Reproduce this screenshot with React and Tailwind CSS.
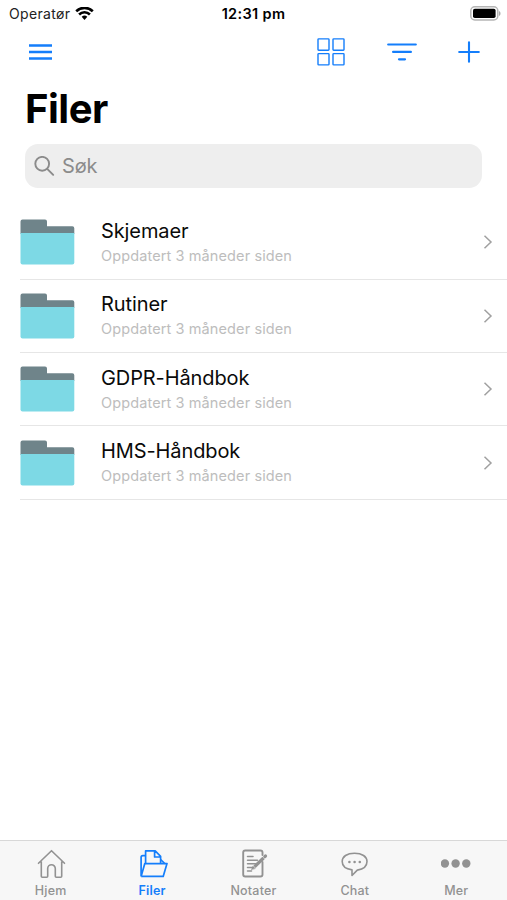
const folders = ["Skjemaer", "Rutiner", "GDPR-Håndbok", "HMS-Håndbok"];

function StatusBar() {
  return (
    <div className="grid h-7 shrink-0 grid-cols-3 items-center text-black">
      <div className="flex items-center gap-[5px] pl-[9px]">
        <span className="text-[14px] leading-5 tracking-[0.35px] text-[#222]">Operatør</span>
        <svg width="19" height="15" viewBox="0 0 19 15" fill="none" stroke="#000" strokeWidth="2.6">
          <path d="M1.2 4.2a12 12 0 0 1 16.6 0" />
          <path d="M4.1 7.5a7.700 7.700 0 0 1 10.800 0" />
          <path d="M6.700 9.800a4 4 0 0 1 5.600 0L9.500 12.900Z" fill="#000" stroke="none" />
        </svg>
      </div>
      <span className="text-center text-[14.5px] leading-5 font-semibold tracking-[0.35px] whitespace-nowrap">12:31 pm</span>
      <div className="flex justify-end pr-[6px]">
        <svg className="-mt-[2px]" width="31" height="15" viewBox="0 0 31 15">
          <rect x=".8" y=".8" width="27" height="13.200" rx="4" fill="#fff" stroke="#b5b5b5" strokeWidth="1.500" />
          <rect x="3" y="2.800" width="22.600" height="9.200" rx="1.800" fill="#000" />
          <path d="M29 5v5c2-.8 2-4.200 0-5Z" fill="#aaa" />
        </svg>
      </div>
    </div>
  );
}

function Toolbar() {
  return (
    <div className="flex h-12 shrink-0 items-center pr-[27px] pl-[29px] text-[#147efb]">
      <svg width="24" height="18" viewBox="0 0 24 18" stroke="currentColor" strokeWidth="2.300">
        <path d="M0 2.500h23M0 9h23M0 15.500h23" />
      </svg>
      <div className="ml-auto flex items-center">
        <svg className="mr-[42px]" width="29" height="28" viewBox="0 0 29 28" fill="none" stroke="currentColor" strokeWidth="1.400">
          <rect x="2" y=".9" width="11" height="11.300" rx=".7" />
          <rect x="17" y=".9" width="11" height="11.300" rx=".7" />
          <rect x="2" y="15.600" width="11" height="11.300" rx=".7" />
          <rect x="17" y="15.600" width="11" height="11.300" rx=".7" />
        </svg>
        <svg className="mr-[41px]" width="30" height="20" viewBox="0 0 30 20" stroke="currentColor" strokeWidth="2.200" strokeLinecap="round">
          <path d="M1.200 2.500h27.600M6.100 9.900h17.800M12 17.300h6" />
        </svg>
        <svg width="22" height="22" viewBox="0 0 22 22" stroke="currentColor" strokeWidth="2.100" strokeLinecap="round">
          <path d="M1.200 11h19.600M11 1.200v19.600" />
        </svg>
      </div>
    </div>
  );
}

function FolderRow({ name }) {
  return (
    <li className="ml-5 flex h-[73.400px] items-center border-b border-[#e6e6e6]">
      <svg className="shrink-0" width="55" height="46" viewBox="0 0 55 46">
        <path d="M.5 15V2.500Q.5.5 2.500.5h22.500q2 0 2 2V7.300H52.300q2 0 2 2V15Z" fill="#6f848a" />
        <path d="M.5 14H54.300v29.500q0 2-2 2H2.500q-2 0-2-2Z" fill="#7dd9e5" />
      </svg>
      <div className="ml-[26px] flex flex-col">
        <span className="text-[20px] leading-[26px] tracking-[-0.1px] text-[#0a0a0a]">{name}</span>
        <span className="text-[14.500px] leading-[23px] tracking-[0.11px] text-[#bdbdbd]">Oppdatert 3 måneder siden</span>
      </div>
      <svg className="mr-[14px] ml-auto" width="10" height="16" viewBox="0 0 10 16" fill="none" stroke="#a0a0a0" strokeWidth="1.500">
        <path d="M1.500 1.700 8 8l-6.500 6.300" />
      </svg>
    </li>
  );
}

function HomeIcon() {
  return (
    <svg width="30" height="32" viewBox="0 0 30 32" fill="none" stroke="currentColor" strokeWidth="1.600" strokeLinejoin="round" strokeLinecap="round">
      <path d="M2.500 15.300 15.500 2.700l13 12.600M5.300 13.500v14.700q0 1 1 1h4.400q1 0 1-1v-7.600a3.800 3.800 0 0 1 7.600 0v7.600q0 1 1 1h4.400q1 0 1-1V13.500" />
    </svg>
  );
}

function FilesIcon() {
  return (
    <svg width="32" height="32" viewBox="0 0 32 32" fill="none" stroke="currentColor" strokeWidth="1.700" strokeLinejoin="round">
      <path d="M5.100 28.400V9.300q0-1.700 1.700-1.700h2.800M5.100 28.400H27.200L31 15.600H8.800L5.100 28.400" />
      <path d="M9.600 15.600V2.900h9.600l5.400 5.400V15.600M18.600 3v6h5.800" />
      <path d="M24.600 11.500 28.800 15.600" />
    </svg>
  );
}

function NotesIcon() {
  return (
    <svg width="30" height="32" viewBox="0 0 30 32" fill="none" stroke="currentColor" strokeWidth="1.900" strokeLinecap="round">
      <path d="M24.500 7V4.500q0-2-2-2H7.200q-2 0-2 2v22q0 2 2 2H22.500q2 0 2-2V14" />
      <path d="M9.500 8.600H15M9.500 12.200h10M9.500 15.800h8M9.500 19.400h6M9.500 22.900h4" strokeWidth="1.500" />
      <path d="m16.500 18.800 9-8.800" strokeWidth="3.200" strokeLinecap="butt" />
      <path d="m26.800 8.700.7-.7" strokeWidth="3.200" />
      <path d="m13.500 21.600 1.300-3.300 2.300 2Z" fill="currentColor" strokeWidth=".5" />
    </svg>
  );
}

function ChatIcon() {
  return (
    <svg width="30" height="32" viewBox="0 0 30 32" fill="none" stroke="currentColor" strokeWidth="1.600" strokeLinejoin="round">
      <path d="M12 21.900v5.600l5.300-5.400C23.300 21.300 27 18.300 27 13.600 27 8.500 22 5.200 14.500 5.200S2.200 8.500 2.200 13.600c0 4.900 3.600 7.500 9.800 8.300Z" />
      <g fill="currentColor" stroke="none"><circle cx="9.400" cy="14" r="1.300" /><circle cx="14.600" cy="14" r="1.300" /><circle cx="19.800" cy="14" r="1.300" /></g>
    </svg>
  );
}

function MoreIcon() {
  return (
    <svg width="30" height="32" viewBox="0 0 30 32" fill="currentColor">
      <circle cx="3.900" cy="15.500" r="4.200" /><circle cx="14.600" cy="15.500" r="4.200" /><circle cx="25.300" cy="15.500" r="4.200" />
    </svg>
  );
}

const tabs = [
  { label: "Hjem", Icon: HomeIcon },
  { label: "Filer", Icon: FilesIcon, active: true },
  { label: "Notater", Icon: NotesIcon },
  { label: "Chat", Icon: ChatIcon },
  { label: "Mer", Icon: MoreIcon },
];

export default function App() {
  return (
    <div className="flex h-[900px] w-[507px] flex-col overflow-hidden bg-white font-['Inter','Liberation_Sans',sans-serif]">
      <StatusBar />
      <Toolbar />
      <h1 className="ml-[25px] h-[68px] text-[40px] leading-[66px] font-bold tracking-[-0.5px] text-black">Filer</h1>
      <div className="mr-[25px] ml-[25px] flex h-11 shrink-0 items-center rounded-[13px] bg-[#eeeeee] pl-[9px] text-[#8b8b8b]">
        <svg width="21" height="21" viewBox="0 0 21 21" fill="none" stroke="currentColor" strokeWidth="1.900">
          <circle cx="8.200" cy="7.800" r="6.900" />
          <path d="m13.200 12.800 6 6" strokeLinecap="round" />
        </svg>
        <span className="ml-[7px] text-[20px] leading-6 tracking-[-0.2px]">Søk</span>
      </div>
      <ul className="mt-[18.300px] flex flex-col">
        {folders.map((name) => <FolderRow key={name} name={name} />)}
      </ul>
      <nav className="mt-auto grid h-[60.500px] shrink-0 grid-cols-5 border-t border-[#d8d8d8] bg-[#f7f7f7]">
        {tabs.map(({ label, Icon, active }) => (
          <div key={label} className={`flex flex-col items-center pt-[7px] ${active ? "text-[#147efb]" : "text-[#929292]"}`}>
            <Icon />
            <span className={`mt-[3px] text-[12.500px] leading-4 tracking-[0.2px] ${active ? "font-semibold" : "font-medium"}`}>{label}</span>
          </div>
        ))}
      </nav>
    </div>
  );
}
